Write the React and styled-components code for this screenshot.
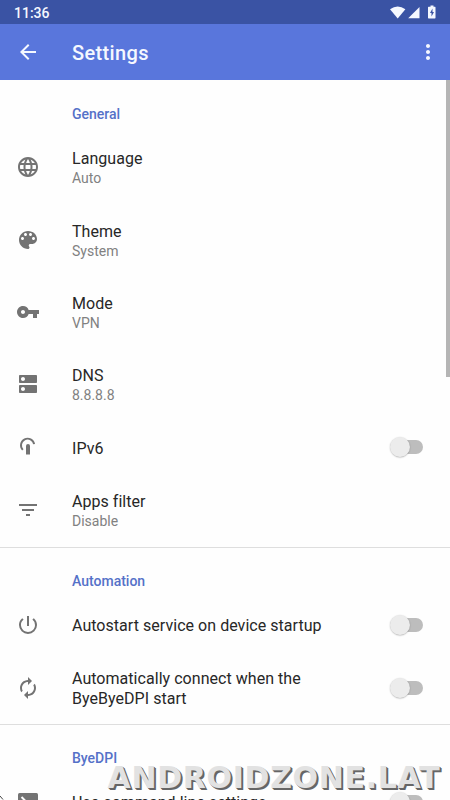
import React from "react";
import styled, { createGlobalStyle } from "styled-components";
import { MdLanguage, MdVpnKey, MdDns, MdFilterList, MdPowerSettingsNew, MdAutorenew, MdArrowBack, MdMoreVert } from "react-icons/md";

const Global = createGlobalStyle`
  * { box-sizing: border-box; }
  body { margin: 0; background: #fefefe; font-family: Roboto, "Liberation Sans", sans-serif; }
`;
const Screen = styled.div`
  position: relative;
  width: 450px;
  height: 800px;
  overflow: hidden;
  display: flex;
  flex-direction: column;
  background: #fefefe;
`;
const StatusBar = styled.header`
  flex: none;
  height: 24px;
  padding: 1px 14px 0;
  display: flex;
  align-items: center;
  justify-content: space-between;
  background: #3a53a4;
  color: #f5f8ff;
  font-size: 14px;
  font-weight: 500;
`;
const StatusIcons = styled.svg`
  display: block;
  width: 46px;
  height: 16px;
`;
const AppBar = styled.div`
  flex: none;
  height: 56px;
  padding: 0 10px 0 16px;
  display: flex;
  align-items: center;
  background: #5976dc;
  color: #f5f8ff;
  svg { display: block; }
`;
const Title = styled.h1`
  flex: 1;
  margin: 2px 0 0 32px;
  font-size: 20px;
  line-height: 24px;
  font-weight: 500;
  letter-spacing: 0.35px;
`;
const Body = styled.main`
  flex: 1;
  min-height: 0;
  display: flex;
  overflow: hidden;
`;
const List = styled.div`
  flex: 1;
  min-width: 0;
`;
const Scrollbar = styled.div`
  width: 4px;
  height: 297px;
  margin-left: -4px;
  background: #b5b5b5;
`;
const Section = styled.section`
  border-bottom: 1px solid #dedede;
`;
const Heading = styled.h2`
  margin: 0;
  height: ${(p) => (p.$first ? 51.5 : 50.5)}px;
  padding: ${(p) => (p.$first ? 26 : 24.8)}px 0 0 72px;
  font-size: 14px;
  line-height: 16px;
  font-weight: 500;
  color: #5571c8;
`;
const Row = styled.div`
  display: flex;
  align-items: center;
  height: ${(p) => (p.$tall ? "72.4px" : "53.5px")};
  padding: 1px 26px 0 16px;
`;
const IconBox = styled.div`
  flex: none;
  width: 24px;
  height: 24px;
  margin: -2px 32px 0 0;
  color: #737373;
  svg { display: block; }
`;
const Texts = styled.div`
  flex: 1;
  min-width: 0;
  padding-right: 40px;
`;
const Label = styled.div`
  font-size: 16px;
  line-height: 19.5px;
  letter-spacing: 0.04px;
  color: #272727;
`;
const Summary = styled.div`
  font-size: 14px;
  line-height: 18px;
  margin-top: 0.5px;
  color: #818181;
`;
const Track = styled.div`
  flex: none;
  display: flex;
  align-items: center;
  width: 30px;
  height: 14px;
  margin: -2px 1px 0 0;
  border-radius: 7px;
  background: #bdbdbd;
`;
const Thumb = styled.div`
  width: 20px;
  height: 20px;
  margin-left: -3px;
  border-radius: 50%;
  background: #ececec;
  box-shadow: 0 0.5px 1.5px rgba(0, 0, 0, 0.3);
`;
const Watermark = styled.div`
  position: absolute;
  left: 107.5px;
  top: 760px;
  font: bold 30px/36px "DejaVu Sans", sans-serif;
  letter-spacing: 0.68px;
  white-space: nowrap;
  color: #e2e2e2;
  text-shadow: 1px 1px 0 #666, 2px 2px 0 #666;
`;

const CornerMark = styled.svg`
  position: absolute;
  left: 0;
  bottom: 0;
  width: 4px;
  height: 5px;
`;

const PaletteIcon = () => (
  <svg width="24" height="24" viewBox="0 0 24 24" fill="currentColor">
    <path d="M12 3c-4.97 0-9 4.03-9 9s4.03 9 9 9c.83 0 1.5-.67 1.5-1.5 0-.39-.15-.74-.39-1.01-.23-.26-.38-.61-.38-.99 0-.83.67-1.5 1.5-1.5H16c2.76 0 5-2.24 5-5 0-4.42-4.03-8-9-8zm-5.5 9c-.83 0-1.5-.67-1.5-1.5S5.67 9 6.5 9 8 9.67 8 10.5 7.33 12 6.5 12zm3-4C8.67 8 8 7.33 8 6.5S8.67 5 9.5 5s1.5.67 1.5 1.5S10.33 8 9.5 8zm5 0c-.83 0-1.5-.67-1.5-1.5S13.67 5 14.5 5s1.5.67 1.5 1.5S15.33 8 14.5 8zm3 4c-.83 0-1.5-.67-1.5-1.5S16.67 9 17.5 9s1.5.67 1.5 1.5-.67 1.5-1.5 1.5z" />
  </svg>
);

const IPv6Icon = () => (
  <svg width="24" height="24" viewBox="0 0 24 24" fill="none">
    <path d="M6.8 14.8A6.6 6.6 0 1 1 18.1 9.2" stroke="currentColor" strokeWidth="1.9" />
    <path d="M10 19.5V11a2 2 0 0 1 4 0v8.500z" fill="currentColor" />
  </svg>
);

const TerminalIcon = () => (
  <svg width="24" height="24" viewBox="0 0 24 24">
    <rect x="2" y="3" width="20" height="18" rx="1.5" fill="currentColor" />
    <path d="M5.5 7 9.500 11l-4 4M12 16h6" fill="none" stroke="#fefefe" strokeWidth="2" />
  </svg>
);

const sections = [
  {
    name: "General",
    items: [
      { icon: MdLanguage, label: "Language", summary: "Auto" },
      { icon: PaletteIcon, label: "Theme", summary: "System" },
      { icon: MdVpnKey, label: "Mode", summary: "VPN" },
      { icon: MdDns, label: "DNS", summary: "8.8.8.8" },
      { icon: IPv6Icon, label: "IPv6", toggle: true },
      { icon: MdFilterList, label: "Apps filter", summary: "Disable" },
    ],
  },
  {
    name: "Automation",
    items: [
      { icon: MdPowerSettingsNew, label: "Autostart service on device startup", toggle: true },
      { icon: MdAutorenew, label: "Automatically connect when the ByeByeDPI start", toggle: true, tall: true },
    ],
  },
  {
    name: "ByeDPI",
    items: [{ icon: TerminalIcon, label: "Use command line settings", toggle: true }],
  },
];

export default function App() {
  return (
    <Screen>
      <Global />
      <StatusBar>
        <span>11:36</span>
        <StatusIcons viewBox="0 0 46 16" fill="#f5f8ff">
          <path d="M0 4.2Q7.7-1.2 15.4 4.2L7.7 13.4z" />
          <path d="M29.5 2v11.3H18.2z" />
          <path d="M39 1.8h1.5V.5h3v1.3H45q.5 0 .5.6v10.4q0 .6-.6.6h-6.3q-.6 0-.6-.6V2.4q0-.6.6-.6z" />
          <path d="M42.5 3.5 40 8h1.5v3.5L44 7h-1.5z" fill="#3a53a4" />
        </StatusIcons>
      </StatusBar>
      <AppBar>
        <MdArrowBack size={24} />
        <Title>Settings</Title>
        <MdMoreVert size={24} />
      </AppBar>
      <Body>
        <List>
          {sections.map((s, i) => (
            <Section key={s.name}>
              <Heading $first={i === 0}>{s.name}</Heading>
              {s.items.map(({ icon: Icon, label, summary, toggle, tall }) => (
                <Row key={label} $tall={Boolean(summary || tall)}>
                  <IconBox><Icon size={24} /></IconBox>
                  <Texts>
                    <Label>{label}</Label>
                    {summary && <Summary>{summary}</Summary>}
                  </Texts>
                  {toggle && <Track><Thumb /></Track>}
                </Row>
              ))}
            </Section>
          ))}
        </List>
        <Scrollbar />
      </Body>
      <CornerMark viewBox="0 0 4 5">
        <path d="M0 1 3 4.5" stroke="#444" fill="none" />
      </CornerMark>
      <Watermark>ANDROIDZONE.LAT</Watermark>
    </Screen>
  );
}
